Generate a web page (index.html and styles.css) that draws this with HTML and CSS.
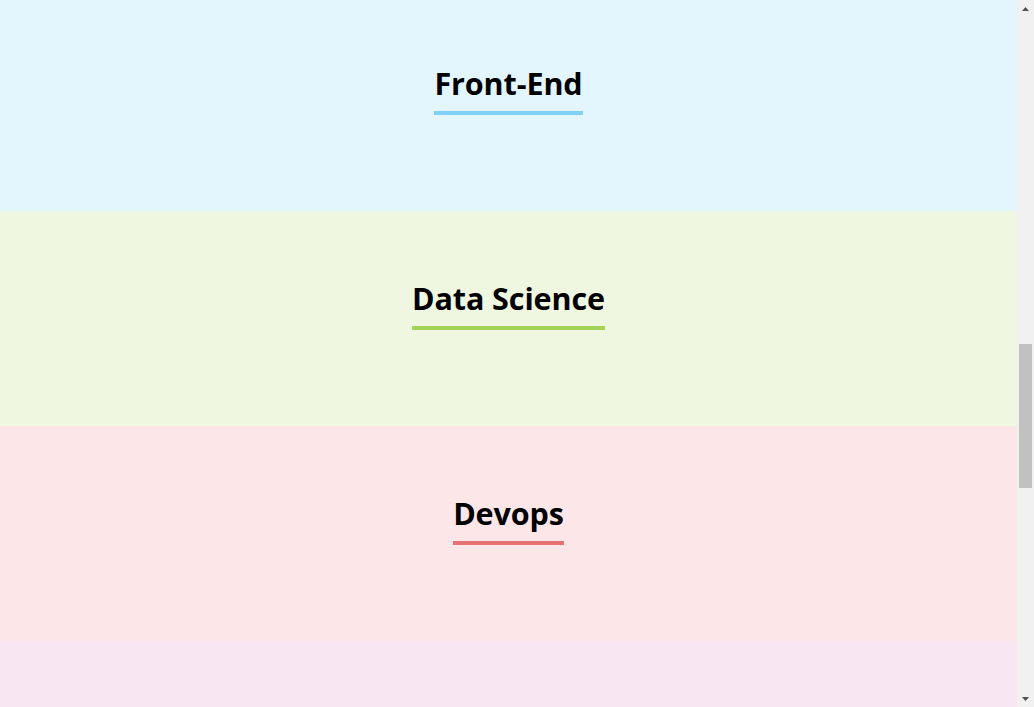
FILE: index.html
```html
<!DOCTYPE html>
<html lang="en">
<head>
<meta charset="utf-8">
<title>Roadmaps</title>
<link rel="stylesheet" href="styles.css">
</head>
<body>
<div class="viewport">
  <main class="tracks">
    <section class="track track-lightblue track-first"><h2 class="track-title">Front-End</h2></section>
    <section class="track track-lightgreen"><h2 class="track-title">Data Science</h2></section>
    <section class="track track-red"><h2 class="track-title">Devops</h2></section>
    <section class="track track-pink track-last"></section>
  </main>
  <aside class="scrollbar" aria-hidden="true">
    <div class="sb-button">
      <svg width="7" height="4" viewBox="0 0 7 4"><polygon points="0,4 3.5,0 7,4" fill="#505050"/></svg>
    </div>
    <div class="sb-track"><div class="sb-thumb"></div></div>
    <div class="sb-button">
      <svg width="7" height="4" viewBox="0 0 7 4"><polygon points="0,0 7,0 3.5,4" fill="#505050"/></svg>
    </div>
  </aside>
</div>
</body>
</html>
```
FILE: styles.css
```css
html, body {
  margin: 0;
  padding: 0;
  height: 100%;
  overflow: hidden;
}
body {
  font-family: "Open Sans", "Noto Sans", sans-serif;
  color: #000;
  background: #fff;
}
.viewport {
  display: flex;
  height: 707px;
}
.tracks {
  flex: 1;
  display: flex;
  flex-direction: column;
  overflow: hidden;
}
.track {
  flex: none;
  height: 215px;
  box-sizing: border-box;
  padding-top: 67px;
  display: flex;
  justify-content: center;
  align-items: flex-start;
  --accent: #999;
}
.track-first {
  height: 211px;
  padding-top: 63px;
}
.track-last {
  flex: 1;
  height: auto;
}
.track-title {
  margin: 0;
  font-size: 30.5px;
  font-weight: 700;
  line-height: 41px;
  padding-bottom: 7px;
  border-bottom: 4px solid var(--accent);
  letter-spacing: -0.1px;
}
.track-lightblue { background: #e4f6fd; --accent: #81d0f8; }
.track-lightgreen { background: #f0f7e0; --accent: #a5d35a; }
.track-red { background: #fde6e7; --accent: #e57373; }
.track-pink { background: #f9e6f3; --accent: #f06292; }

.scrollbar {
  width: 17px;
  flex: none;
  background: #f1f1f1;
  display: flex;
  flex-direction: column;
}
.sb-button {
  height: 17px;
  flex: none;
  display: flex;
  align-items: center;
  justify-content: center;
}
.sb-track {
  flex: 1;
  padding-top: 327px;
}
.sb-thumb {
  height: 144px;
  margin: 0 2px;
  background: #c1c1c1;
}
```
